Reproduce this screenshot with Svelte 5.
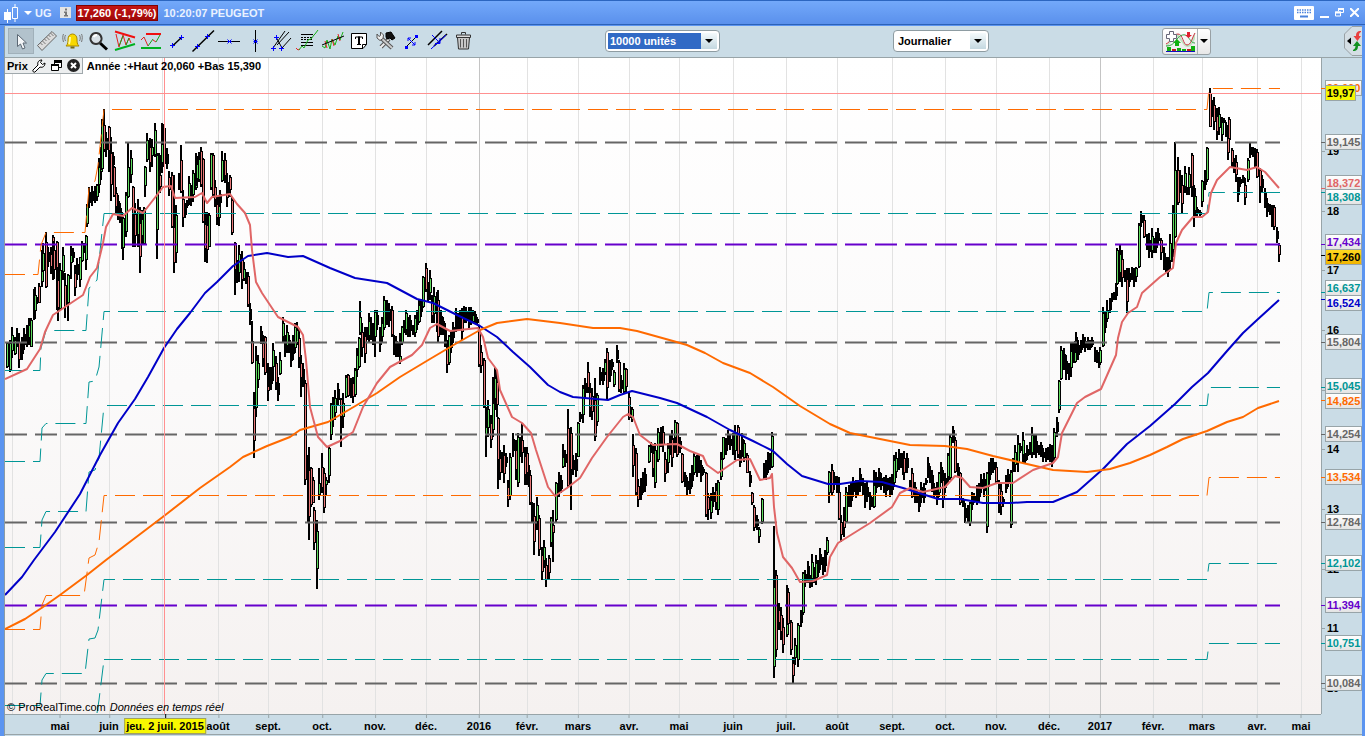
<script>
  const BLUE = "#0000c8";
  const ORANGE = "#ff6a00";
  const TEAL = "#009696";
  const SALMON = "#e06666";
  const GREY = "#666666";
  const PURPLE = "#6600cc";

  // visible plot window, in chart units
  const view = { x: 5, y: 58, width: 1316, height: 656 };

  let units = "10000 unités";
  let period = "Journalier";
  let activeTool = "Pointeur";

  const plus = (x, y) => `M${x - 2.5} ${y}h5M${x} ${y - 2.5}v5`;
  const cross = (x, y) => `M${x - 2} ${y - 2}l4 4M${x + 2} ${y - 2}l-4 4M${x - 2} ${y}h4`;

  const tools = [
    { name: "Pointeur", shapes: [{ d: "M9.5 6.500v12l3-2.500 2 5 2.500-1-2-5h3.500z", fill: "#f4f6f8", stroke: "#5c6874" }] },
    {
      name: "Règle",
      shapes: [
        { d: "M3.500 17.500L18 3.500l4.500 4.500L8 22.500z", fill: "#dcdcdc", stroke: "#666" },
        { d: "M6.500 15l2 2M8.500 13l3 3M10.500 11l2 2M12.500 9l3 3M14.500 7l2 2M16.500 5l3 3", stroke: "#777" }
      ]
    },
    {
      name: "Alertes",
      shapes: [
        { d: "M6 18c2-2 2-4 2-7 0-3 2-5 4.500-5s4.500 2 4.500 5c0 3 0 5 2 7z", fill: "#f8d800", stroke: "#a88800" },
        { d: "M10.500 18.500h4v2h-4z", fill: "#7a6a10" },
        { d: "M10 9c0 3 0 5-1 7", stroke: "#fff8a0", w: 2 },
        { d: "M5.500 7c-1 2-1 4 0 6M3.500 6c-1 2-1 5 0 8M19.500 7c1 2 1 4 0 6M21.500 6c1 2 1 5 0 8", stroke: "#777" }
      ]
    },
    {
      name: "Zoom",
      shapes: [
        { d: "M14 15l7 6.500", stroke: "#000", w: 3 },
        { d: "M10 5a5.500 5.500 0 1 0 .01 0z", fill: "#d8e0e6", stroke: "#333", w: 2 },
        { d: "M7.500 9c1-1.500 2-2 3.500-2", stroke: "#fff", w: 2 }
      ]
    },
    {
      name: "Triangles",
      shapes: [
        { d: "M4 6l3 13 4-12 3 10 3-7 2 5", stroke: "#e42020" },
        { d: "M7 18l4-10M14 17l3-7", stroke: "#18a018" },
        { d: "M3 3.500l20 6", stroke: "#f01010", w: 2 },
        { d: "M3 22l20-6", stroke: "#00b020", w: 2 }
      ]
    },
    {
      name: "Supports et résistances",
      shapes: [
        { d: "M3 12l3-3 4 9M15 12l3 2", stroke: "#e42020" },
        { d: "M10 18l5-7M18 14l4-7", stroke: "#18a018" },
        { d: "M8 6h15", stroke: "#f01010", w: 2 },
        { d: "M3 20h20", stroke: "#00b020", w: 2 }
      ]
    },
    { name: "Segment", shapes: [{ d: "M8.500 18l9-8.500", stroke: "#000", w: 1.500 }, { d: plus(8.5, 17.5) + plus(17.5, 9.5), stroke: "#00f" }] },
    { name: "Droite", shapes: [{ d: "M2.500 23.500L24 2.500", stroke: "#000", w: 1.500 }, { d: plus(7.5, 18.5) + plus(17.5, 8.5), stroke: "#00f" }] },
    { name: "Horizontale", shapes: [{ d: "M2 13.500h22", stroke: "#000" }, { d: cross(13.5, 13.5), stroke: "#00f" }] },
    { name: "Verticale", shapes: [{ d: "M13.500 2v22", stroke: "#000" }, { d: cross(13.5, 13.5), stroke: "#00f" }] },
    {
      name: "Fourchette",
      shapes: [
        { d: "M5 20L17 3M9 17L21 4M14 20l9-10M8 9l6 11", stroke: "#000" },
        { d: plus(8.5, 9.5) + plus(5.5, 20.5) + plus(13.5, 20.5), stroke: "#00f" }
      ]
    },
    {
      name: "Fibonacci",
      shapes: [
        { d: "M7 6.500h12M7 17.500h12M7 14.500h12", stroke: "#000" },
        { d: "M7 9.500h12M7 11.500h12", stroke: "#000", dash: "2 1" },
        { d: "M2 20l2 2 2-1", stroke: "#e42020" },
        { d: "M5 22l3-4 2 2 4-8 3-1 3-4 1-1 3-4", stroke: "#18b018" }
      ]
    },
    {
      name: "Régression",
      shapes: [
        { d: "M2 18l3 2 2-8 3 9 2-10 3 6 3-9 2 4 3-8", stroke: "#18b018" },
        { d: "M5 13l2 7M12 11l2 7M18 6l2 7", stroke: "#e42020" },
        { d: "M2 17L24 8", stroke: "#000" }
      ]
    },
    {
      name: "Texte",
      shapes: [
        { d: "M5.500 5.500h15v11l-3.500 4h-11.500z", fill: "#fff", stroke: "#000" },
        { d: "M20.500 16.500h-4v4", stroke: "#000" },
        { d: "M9.500 11V9h7v2M11 16.500h4", stroke: "#000" },
        { d: "M13 8.500v8", stroke: "#000", w: 2 }
      ]
    },
    {
      name: "Paramètres",
      shapes: [
        { d: "M9 19l8-8", stroke: "#555", w: 4 },
        { d: "M8.500 19.500l8-8", stroke: "#eee", w: 2 },
        { d: "M8 9l12 11", stroke: "#555", w: 4 },
        { d: "M8 9l12 11", stroke: "#ccc", w: 2 },
        { d: "M5 6v4l3 2.500 3-2 .5-3.500-3-3v3.500l-1.500 1z", fill: "#eee", stroke: "#555" },
        { d: "M14 5l5-1 4 6-3 2-2-2-3 1-1-2z", fill: "#111", stroke: "#000" }
      ]
    },
    {
      name: "Déplacer",
      shapes: [
        { d: "M8 19L19 8", stroke: "#000" },
        { d: "M7 18h3v3h-3zM17 7h3v3h-3z", fill: "#00f" },
        { d: "M10 10l7 7M14 17h3v-3M10 13v-3h3", stroke: "#00f" }
      ]
    },
    {
      name: "Dupliquer",
      shapes: [
        { d: "M4 17L18 3M10 18L23 6", stroke: "#000", w: 1.5 },
        { d: "M7 21L22 7M8 7l8 8M16 10v5.500h-5", stroke: "#00f" }
      ]
    },
    {
      name: "Supprimer",
      shapes: [
        { d: "M7.500 9.500h12l-1 11.500h-10z", fill: "#c8c8c8", stroke: "#333" },
        { d: "M10.500 11v8.500M13.500 11v8.500M16.500 11v8.500", stroke: "#555" },
        { d: "M6.500 7h14v2.500h-14z", fill: "#ddd", stroke: "#333" },
        { d: "M11.500 6.500v-2h4v2", stroke: "#333" }
      ]
    }
  ];

  const months = [
    [12, ""], [60, "mai"], [109, "juin"], [162, ""], [218, "août"], [268, "sept."], [322, "oct."],
    [375, "nov."], [426, "déc."], [479, "2016"], [527, "févr."], [578, "mars"], [629, "avr."],
    [679, "mai"], [733, "juin"], [786, "juil."], [837, "août"], [892, "sept."], [945, "oct."],
    [996, "nov."], [1049, "déc."], [1100, "2017"], [1153, "févr."], [1202, "mars"],
    [1257, "avr."], [1301, "mai"]
  ];

  const scale = [
    [151, "19"], [211, "18"], [270, "17"], [330, "16"],
    [449, "14"], [509, "13"], [569, "12"], [628, "11"], [688, "10"]
  ];

  // value, level on the chart, centre of the tag, colour
  const tags = [
    ["20,060", 88, 88, ORANGE],
    ["19,145", 142, 142, GREY],
    ["18,372", 188, 183, SALMON],
    ["18,308", 192, 197, TEAL],
    ["17,434", 244, 242, PURPLE],
    ["17,260", 255, 257, "#000000"],
    ["16,637", 292, 288, TEAL],
    ["16,524", 299, 303, BLUE],
    ["15,804", 342, 342, GREY],
    ["15,045", 387, 386, TEAL],
    ["14,825", 400, 401, ORANGE],
    ["14,254", 434, 434, GREY],
    ["13,534", 477, 477, ORANGE],
    ["12,784", 522, 522, GREY],
    ["12,102", 563, 563, TEAL],
    ["11,394", 605, 605, PURPLE],
    ["10,751", 643, 643, TEAL],
    ["10,084", 683, 683, GREY]
  ];

  const pivots = [
    [142, GREY], [342, GREY], [434, GREY], [522, GREY], [683, GREY], [244, PURPLE], [605, PURPLE]
  ];

  // yearly range levels: run-up on the left, then the long flat part
  const levels = [
    { color: ORANGE, rise: "5,274.5 38,274.5 41,245 46,232.5 85,232.5 89,188 95,181 98,165 104,109.5", flat: 109, last: 88, offset: 20 },
    { color: TEAL, rise: "5,370.5 40,370.5 41,348 46,330.5 86,330.5 89,288 92,286 97,280 104,213.5", flat: 213, last: 192, offset: 0 },
    { color: TEAL, rise: "5,461.5 40,461.5 42,428 46,423.5 86,423.5 89,382 95,381 99,367 104,311.5", flat: 311, last: 292, offset: 14 },
    { color: TEAL, rise: "5,547.5 40,547.5 42,520 46,511.5 86,511.5 89,472 95,470 99,458 104,405.5", flat: 405, last: 387, offset: 25 },
    { color: ORANGE, rise: "5,629.5 40,629.5 42,605 46,595.5 84,595.5 89,558 95,555 99,542 104,495.5", flat: 495, last: 477, offset: 17 },
    { color: TEAL, rise: "5,705.5 40,705.5 42,680 46,673.5 85,673.5 89,639 95,638 98,630 104,579.5", flat: 579, last: 563, offset: 9 },
    { color: TEAL, rise: "97,713 99,700 104,659.5", flat: 659, last: 643, offset: 1 }
  ];

  const averages = [
    {
      color: BLUE,
      points:
        "5,595 22,577 34,560 55,532 80,494 100,455 118,423 135,399 148,377 164,348 177,329 190,313 205,293 217,282 233,266 248,256 267,253 288,257 303,256 330,268 355,278 387,283 417,299 433,303 457,315 480,326 497,337 513,352 530,367 548,385 560,392 573,397 608,400 620,395 632,391 660,398 677,403 707,417 730,430 753,441 773,451 787,464 802,476 828,484 840,484 860,481 882,482 903,488 938,499 960,499 983,503 1010,503 1027,502 1053,502 1077,492 1103,469 1127,444 1150,426 1175,404 1192,387 1208,373 1227,351 1243,333 1257,320 1279,300"
    },
    {
      color: ORANGE,
      points:
        "5,629 25,619 43,607 60,595 87,575 106,560 164,516 200,488 230,467 243,457 267,446 290,437 300,430 328,422 357,405 377,393 400,377 430,359 457,343 480,330 497,323 527,319 560,323 593,328 620,328 637,331 673,341 687,345 705,353 723,363 750,373 773,387 800,406 830,424 850,433 880,439 910,445 945,446 967,449 993,456 1027,464 1053,470 1087,472 1110,469 1130,463 1150,455 1167,447 1183,439 1207,431 1227,422 1243,417 1258,408 1279,401"
    },
    {
      color: SALMON,
      points:
        "5,379 27,369 40,349 45,332 53,315 68,305 83,295 90,277 97,268 103,243 106,227 113,214 123,216 132,208 143,213 157,195 163,187 171,186 175,198 195,197 202,193 207,203 212,197 230,194 237,204 245,213 250,225 252,250 256,282 262,293 278,317 298,327 303,335 306,360 310,407 318,437 327,447 340,441 353,432 363,407 377,383 390,367 412,355 422,345 430,328 437,324 450,331 478,328 483,337 488,358 497,370 500,390 512,417 522,423 531,433 536,450 548,487 555,496 567,488 580,478 592,458 607,437 623,417 628,414 633,417 640,435 653,445 677,444 690,451 703,456 707,465 718,473 737,460 750,459 760,480 770,478 772,474 774,507 777,533 783,557 792,568 800,582 813,581 827,575 830,557 838,543 870,523 892,507 900,493 910,488 923,492 945,487 955,476 962,478 970,487 983,488 997,483 1013,483 1033,470 1053,463 1058,457 1062,433 1077,403 1085,397 1101,389 1116,355 1118,338 1122,322 1128,313 1137,307 1142,293 1160,277 1173,268 1176,243 1182,230 1193,217 1202,217 1208,212 1211,193 1217,180 1230,167 1247,170 1257,167 1265,172 1279,188"
    }
  ];

  // Price bars by period, in thirds of a unit from the period's origin:
  // x high low [open close]
  const sessions = [
    {
      origin: [0, 80],
      bars:
        "22 785 865 862 790,30 780 875 870 790,36 742 835,44 770 825 822 780,51 745 800,58 760 865,65 770 840,72 745 810,80 735 800,87 715 795,94 714 802 800 720,101 627 720 718 630,106 622 718,112 650 672,118 610 670 618 668,125 510 620 606 515,130 490 575 572 520,138 457 625 485 620,145 500 560,152 500 582,158 465 600 470 512,163 482 598,170 483 690 486 688,173 560 724,181 550 690 688 570,189 500 600,194 580 715,204 583 722 670 586,212 498 598 550 524,218 505 545,225 555 648,232 535 600,240 530 622 600 532,247 484 545 542 490,252 490 520,257 466 570 540 468,262 372 440 432 374,267 320 385,274 335 350,277 318 378,284 318 368,290 312 364 350 316,297 235 340,304 200 300,307 118 270 268 120,313 88 215 135 210,319 155 230,326 137 275 140 212,332 170 362,338 215 270,343 258 352 262 348,349 320 400,355 345 420,361 370 430,365 395 508,370 410 540 505 415,377 335 470 455 344,384 185 355 350 260,392 210 310,400 318 500 322 402,406 370 502,413 358 500,420 380 580,426 390 495,431 380 496 492 384,436 258 350 318 262,441 160 245 240 180,449 175 275,457 178 262 228 202,466 130 230 226 150,470 220 538 450 225,476 220 330,481 225 340 285 320,487 130 278 250 192,491 132 260 145 252,502 205 268,508 272 348,515 275 445 285 440,521 285 580 440 550,529 375 550 518 405,536 278 330,543 195 340 240 335,550 330 440,556 370 415,561 360 385,567 288 375,573 315 378,580 270 365 346 278,587 220 330 325 286,592 228 318,597 215 306 300 236,604 200 320 212 316,610 235 430 238 425,616 395 545,622 395 550,627 400 502 500 404,632 220 330 325 222,640 220 355 224 345,646 300 380,652 350 435,657 345 438,661 330 380,667 212 306 302 240,674 218 310,680 280 380,685 310 345,691 285 350 290 330,697 350 465 360 460,705 485 645 490 570,712 540 610,718 495 605,725 512 628,732 545 602 598 568,738 575 612,744 575 680 588 676,750 670 735,755 722 852 782 848"
    },
    {
      origin: [230, 220],
      bars:
        "72 515 713,78 378 592 565 420,85 405 505,93 318 372,99 345 440,105 348 465 352 458,113 430 542,118 440 500,123 440 510,130 368 482 440 390,137 408 510 430 490,143 470 542,150 395 465 462 420,158 290 370,165 345 410,172 315 400,178 345 400,182 370 440,189 345 420,195 310 400 385 320,202 305 375 370 330,208 325 445,214 405 532 430 475,220 430 500,226 480 795 490 780,233 705 905,237 680 960,243 740 860 745 856,248 770 850 780 848,252 862 990 870 970,262 900 1106 1046 932,268 745 840 825 788,275 700 820 740 805,282 745 880 760 865,289 770 825 796 780,297 680 790 768 684,302 550 660 645 552,309 530 622,316 510 600,323 490 555,333 535 682 537 590,340 520 625 590 550,348 465 535 530 470,354 462 530 466 528,362 475 535,370 470 550,376 445 530 526 450,382 385 470,387 350 445 442 354,390 243 345 340 290,397 310 410,404 320 428,410 320 360,416 280 370,422 290 360,428 310 375,435 270 410 350 275,441 270 330,449 320 395,456 290 370,462 228 330 325 240,470 240 315,476 250 320,485 258 350 270 345,491 345 405,498 348 410,504 368 412,509 340 432 425 408,515 318 375 370 320,522 300 340,528 270 345 330 280,535 290 350,541 285 350,548 315 345,554 285 350 340 295,560 270 330,566 240 310 305 255,573 238 290,580 168 265 260 170,588 130 215 145 210,594 185 245,600 150 240,607 225 310,613 200 310,620 215 335,625 210 365 240 350,632 270 345,638 290 345,645 310 380,652 360 460,657 345 435 430 348,664 330 400,670 305 370,677 265 335,684 280 330,690 270 330,695 265 360,702 258 310,709 262 310,716 262 325,722 262 315,729 270 310 305 285,736 272 310,741 290 315,746 315 440 330 435,752 375 460,763 415 565 420 560,768 560 712 645 620,775 540 650,782 585 685,790 470 650 630 550,796 440 570,800 450 590,805 590 808 595 720,811 690 780,817 695 760,822 675 790,828 700 740,834 780 860,841 700 840 828 710,849 640 710,857 660 780,863 640 800 790 650,870 650 710,877 610 730 660 700,884 680 795,890 680 795 700 760,896 735 800,901 760 855 765 850,906 845 905,912 850 1005,920 830 930,928 885 1008 895 990,936 980 1080,942 960 1045,948 1015 1100,956 1005 1080 1015 1060,963 890 980 970 895,970 870 1025 915 940"
    },
    {
      origin: [540, 320],
      bars:
        "49 485 605 600 490,56 455 530,63 465 520,70 372 445 440 410,76 390 440,84 268 500 325 498,93 320 570 340 450,100 405 465,107 400 470,115 305 412 410 310,121 275 305,129 195 310 285 205,135 175 235,144 125 220 155 205,151 190 290,157 205 300,164 175 362 240 350,172 220 318 305 225,181 142 195,188 145 195,194 118 165 160 125,201 85 238 95 205,209 120 185,216 118 150,222 150 200 195 155,231 75 130,238 120 215 125 210,244 165 220,251 128 222 215 148,258 145 215 148 200,268 215 300 230 295,275 262 305 300 268,280 342 470,287 385 525 398 520,295 478 560,303 475 540,310 455 520,316 445 515,326 375 428 425 378,332 365 400,339 375 470,346 370 505 488 390,355 325 425 420 335,362 320 380,369 318 395,376 395 485,383 370 460 430 385,390 345 405,396 330 440,402 355 400,406 300 400 355 305,411 305 410 308 405,419 350 400,427 400 488 402 486,434 455 500,442 470 525,449 460 522,456 435 500,463 400 465 460 408,470 405 470,477 405 460,484 420 485,490 440 465,497 455 590 460 585,505 520 600 530 570,512 520 598,519 500 560,527 490 570,535 480 585 570 485,543 395 480 470 418,550 350 420 418 352,557 355 405,564 330 375,570 345 390,578 338 405,585 315 420,593 315 415 320 405,600 390 440,607 340 410,613 360 425 415 370,621 400 460 405 458,630 452 500,636 515 555 520 550,643 555 632 560 625,651 585 630,658 620 670 650 628,667 535 612 605 538,673 430 480,679 420 480,685 395 460,690 400 450,695 335 445 440 348,702 618 1075 1040 800,709 750 1010 765 990,716 850 930,723 860 960,729 895 1000,740 795 950 945 810,745 805 915 815 912,754 900 1005 905 990,760 1010 1088,765 955 1035,775 910 1040 1020 915,782 870 920,790 755 885 880 760,796 750 800,803 722 790,810 765 805,816 702 800,823 740 790,829 705 795,835 720 770,841 685 750,848 710 765,855 690 755,862 652 705 700 660"
    },
    {
      origin: [820, 320],
      bars:
        "28 453 548 520 456,36 433 525 450 520,43 455 510,50 468 520,56 470 600 515 598,64 585 665,71 560 650 600 625,79 500 610 605 515,86 495 560,93 488 560,100 470 530,107 480 535,114 480 525,121 443 515,128 475 525,134 490 565,141 485 545,149 515 570,156 530 560,162 450 565 560 495,169 455 520,176 443 500,184 460 510,191 470 520,198 465 530,205 475 510,211 470 530,217 462 525,223 405 500 490 420,229 395 475,237 388 450,243 400 445,248 400 465,253 393 480,260 400 460,270 480 510,276 445 535 460 530,284 485 550,291 510 550,297 520 575,304 485 550,311 490 550,318 475 495,323 412 475,330 438 490,336 450 515,343 490 535,350 485 555,356 455 530 520 460,363 425 490,369 450 565,376 458 520,384 400 490 470 405,391 345 480 475 350,399 318 370,405 350 460 360 455,413 430 470,421 455 555 460 550,429 535 560,436 550 608,443 555 605,450 545 618 608 550,456 515 570,463 520 550,471 495 555,478 490 545,484 462 520,491 460 530,501 455 640 620 460,508 425 500,513 415 465,520 415 460,527 425 490 440 485,536 480 580,543 490 585,550 530 560,558 465 520,565 448 500,573 450 625 615 455,579 415 455,586 375 455,593 345 455,600 370 400,609 335 430,615 400 430,622 375 420,629 365 405,635 322 415 400 345,642 345 405,649 345 415,656 375 405,663 365 410,670 385 425,677 385 425,684 380 420,690 372 425,697 375 440,703 325 420 415 335,711 290 350,718 180 280 270 182,723 78 180 178 90,731 85 150,738 105 180,746 130 180,753 68 170,759 65 130,764 62 130 125 75,768 35 100,775 60 120,782 60 100,789 42 85,796 52 95,803 52 90,810 60 90,817 52 82,824 80 125,830 90 130,837 95 145,841 80 135 130 90"
    },
    {
      origin: [1040, 80],
      bars:
        "189 680 800 798 698,195 695 760,201 660 725 718 690,209 655 700,215 640 665,222 635 660,227 608 660,232 505 615 612 510,240 495 605,247 510 620,254 570 605,261 565 698,267 565 620,275 560 600,282 565 620,289 560 605 592 565,297 430 565 562 435,303 392 440,312 405 475 420 470,320 462 510,327 460 535,335 445 535,342 475 520,348 455 520,354 445 495,364 475 540 480 520,371 500 570,377 530 575,384 530 590,390 462 570,397 490 545,400 375 515 510 400,405 185 475 470 270,414 230 375 270 370,421 270 340,427 285 402,435 258 340,441 320 345,448 260 345,456 218 350 225 320,461 315 440,466 325 415,470 380 410,480 390 410,487 300 380 365 302,495 270 330,502 200 305 300 203,509 25 142 40 140,516 60 110,523 50 150,530 85 180,537 82 165,545 110 182 165 125,553 115 130,558 125 170,566 112 190 116 180,565 150 240,575 205 265 210 250,582 235 280,588 225 305,595 290 365,601 290 320,608 285 310,615 295 375,624 235 305 300 240,630 190 235,638 200 232,645 205 260,652 208 295 215 290,660 265 370 270 320,667 285 335,675 325 385,682 355 410,690 372 405,697 375 440,702 375 450 380 440,712 440 490,718 490 545 495 525"
    }
  ];

  function readSession({ origin, bars }) {
    const [ox, oy] = origin;
    let previous = 0;
    return bars.split(",").map((bar) => {
      const [x, high, low, open, close] = bar.split(" ").map(Number);
      const middle = (high + low) / 2;
      const inset = (low - high) * 0.25;
      const up = open === undefined ? middle < previous : close < open;
      const top = open === undefined ? high + inset : Math.min(open, close);
      const bottom = open === undefined ? low - inset : Math.max(open, close);
      previous = middle;
      const toY = (value) => oy + Math.round(value / 3);
      return {
        x: ox + Math.round(x / 3),
        high: toY(high),
        low: toY(low),
        top: toY(top),
        bottom: toY(bottom),
        up,
        filled: open !== undefined || low - high > 75
      };
    });
  }

  const candles = sessions.flatMap(readSession);

  const left = (x) => ((x - view.x) / view.width) * 100;
  const top = (y) => ((y - view.y) / view.height) * 100;
</script>

<main class="window">
  <header class="titlebar">
    <svg class="logo" width="16" height="20" viewBox="0 0 16 20">
      <path d="M0 9h7v8H0zM3 6h1v14H3z" fill="#fff" />
      <path d="M8.500 4.500h5v11h-5zM11 1v3.500M11 15.500V19" fill="none" stroke="#fff" />
    </svg>
    <button class="caret" aria-label="Choisir une valeur">
      <svg width="8" height="4" viewBox="0 0 8 4"><path d="M0 0h8L4 4z" fill="#fff" /></svg>
    </button>
    <span class="ticker">UG</span>
    <button class="info" aria-label="Informations">
      <svg width="11" height="11" viewBox="0 0 11 11">
        <path d="M0 0h11v11H0z" fill="#e4e4e4" />
        <path d="M5 1.500h2v2H5zM4 4.500h3V8h1v1.500H4V8h1V6H4z" fill="#777" />
      </svg>
    </button>
    <strong class="quote">17,260 (-1,79%)</strong>
    <span class="name">10:20:07 PEUGEOT</span>
    <div class="controls">
      <button aria-label="Clavier">
        <svg width="20" height="14" viewBox="0 0 20 14">
          <rect width="20" height="14" rx="1" fill="#fff" />
          <path d="M3 4h14M3 6.500h14" stroke="#4b82dc" stroke-width="1.500" stroke-dasharray="1.500 1" />
          <path d="M6 10.500h8" stroke="#4b82dc" stroke-width="2" />
        </svg>
      </button>
      <button aria-label="Réduire">
        <svg width="9" height="12" viewBox="0 0 9 12"><path d="M0 10h9" stroke="#fff" stroke-width="2" /></svg>
      </button>
      <button aria-label="Restaurer">
        <svg width="9" height="9" viewBox="0 0 9 9">
          <path d="M3.500 3V.5h5v4H6M.5 4h5v4h-5z" fill="none" stroke="#fff" />
          <path d="M3 1h6M0 4.500h6" stroke="#fff" stroke-width="2" />
        </svg>
      </button>
      <button aria-label="Fermer">
        <svg width="9" height="9" viewBox="0 0 9 9"><path d="M0 0l9 9M9 0L0 9" stroke="#fff" stroke-width="2" /></svg>
      </button>
    </div>
  </header>

  <div class="body">
    <nav class="toolbar">
      <div class="tools">
        {#each tools as tool}
          <button
            class="tool"
            class:active={activeTool === tool.name}
            aria-label={tool.name}
            on:click={() => (activeTool = tool.name)}
          >
            <svg width="26" height="26" viewBox="0 0 26 26">
              {#each tool.shapes as shape}
                <path
                  d={shape.d}
                  fill={shape.fill ?? "none"}
                  stroke={shape.stroke ?? "none"}
                  stroke-width={shape.w ?? 1}
                  stroke-dasharray={shape.dash}
                />
              {/each}
            </svg>
          </button>
        {/each}
      </div>

      <label class="combo units">
        <select bind:value={units} aria-label="Unités">
          <option>10000 unités</option>
          <option>1000 unités</option>
        </select>
        <span class="arrow"></span>
      </label>
      <label class="combo period">
        <select bind:value={period} aria-label="Période">
          <option>Journalier</option>
          <option>Hebdomadaire</option>
        </select>
        <span class="arrow"></span>
      </label>

      <div class="indicators">
        <button aria-label="Ajouter un indicateur">
          <svg width="32" height="22" viewBox="0 0 32 22">
            <path d="M2 15c5-2 7-11 11-11s6 11 10 11 5-6 8-12v6c-3 6-4 8-8 8S16 7 12 7 7 15 2 17z" fill="#bfe4bf" />
            <path d="M2 14c5-2 7-10 12-10s5 11 9 11 5-7 8-12" fill="none" stroke="#cc3040" />
            <path d="M2 16c6 0 8-3 11-7s8-6 11-2 4 6 7 6" fill="none" stroke="#38a048" />
            <path d="M5.500 1.500h4v3h3v4h-3v3h-4v-3h-3v-4h3z" fill="#fff" stroke="#667" />
            <path d="M11 16h4v-3h2l-4-4-4 4h2z" fill="#10b010" />
            <path d="M23 2h3v3h2l-3.500 3L21 5h2z" fill="#e02030" />
            <path d="M3 17h4v4H3zM13 18h4v3h-4zM18 19h4v2h-4zM27 16h4v5h-4z" fill="#10b010" />
            <path d="M8 19h4v2H8zM23 19h4v2h-4z" fill="#c02020" />
            <path d="M2 21.500h29" stroke="#1010c0" />
          </svg>
        </button>
        <button class="more" aria-label="Liste des indicateurs">
          <svg width="8" height="4" viewBox="0 0 8 4"><path d="M0 0h8L4 4z" /></svg>
        </button>
      </div>

      <button class="trade" aria-label="Ouvrir le carnet d'ordres">
        <svg width="18" height="30" viewBox="0 0 18 30">
          <path d="M18 .5H8L.5 8v14L8 29.500h10" fill="#d4dee4" stroke="#98a0a4" />
          <path d="M7 11.500v7L3 15z" />
          <path d="M17 5c-4 0-5 2-5 5H9.500l4 5 3.500-5h-2c0-2 0-3 2-4z" fill="#e84040" />
          <path d="M9 25c4 0 5-2 5-5h3l-4-5-4 5h2.500c0 2-1 3-2.500 4z" fill="#109020" />
        </svg>
      </button>
    </nav>

    <section class="chart">
      <div class="plot">
        <svg
          class="drawing"
          viewBox="{view.x} {view.y} {view.width} {view.height}"
          preserveAspectRatio="none"
          role="img"
          aria-label="Cours de Peugeot"
        >
          {#each months as [x, label]}
            <line x1={x + 0.5} x2={x + 0.5} y1="58" y2="714" stroke={label.startsWith("20") ? "#c4c4c4" : "#e2e2e2"} />
          {/each}

          <g shape-rendering="crispEdges">
            {#each candles as c}
              <rect x={c.x - 1} y={c.high} width="2" height={c.low - c.high} />
              <rect x={c.x - 1} y={c.top} width="3" height={c.bottom - c.top} />
              {#if c.filled && c.bottom - c.top > 2}
                <rect x={c.x} y={c.top + 1} width="1" height={c.bottom - c.top - 2} fill={c.up ? "#5fdc5f" : "#e87878"} />
              {/if}
            {/each}
          </g>

          {#each pivots as [y, color]}
            <line x1="5" x2="1280" y1={y + 0.5} y2={y + 0.5} stroke={color} stroke-width="2" stroke-dasharray="22 8" />
          {/each}

          {#each levels as level}
            <g fill="none" stroke={level.color} stroke-dasharray="20 8">
              <polyline points={level.rise} />
              <polyline
                points="104,{level.flat + 0.5} 1207,{level.flat + 0.5} 1209,{level.last + 0.5} 1280,{level.last + 0.5}"
                stroke-dashoffset={level.offset}
              />
            </g>
          {/each}

          {#each averages as average}
            <polyline points={average.points} fill="none" stroke={average.color} stroke-width="2" stroke-linejoin="round" />
          {/each}

          <path d="M5 93.500h1316M164.500 58v656" fill="none" stroke="#ff9090" />
        </svg>

        <div class="legend">
          <div class="series">
            <span>Prix</span>
            <button aria-label="Réglages">
              <svg width="14" height="14" viewBox="0 0 14 14">
                <path d="M1 11l5-5c-1-3 1-5 4-5L8.500 3.500l2 2L13 4c0 3-2 5-5 4l-5 5c-1 1-3-1-2-2z" fill="#fff" stroke="#000" />
              </svg>
            </button>
            <button aria-label="Détacher">
              <svg width="13" height="13" viewBox="0 0 13 13">
                <path d="M4.500 1.500h7v7h-7z" fill="#fff" stroke="#000" />
                <path d="M4 1h8v3H4z" />
                <path d="M1.500 5.500h7v6h-7z" fill="#fff" stroke="#000" />
                <path d="M1 5h8v2H1z" />
              </svg>
            </button>
            <button aria-label="Masquer">
              <svg width="13" height="13" viewBox="0 0 13 13">
                <circle cx="6.500" cy="6.500" r="6.500" fill="#222" />
                <path d="M4 4l5 5M9 4l-5 5" stroke="#fff" stroke-width="2" />
              </svg>
            </button>
          </div>
          <span>Année :+Haut 20,060 +Bas 15,390</span>
        </div>

        <p class="credit"><span>© ProRealTime.com</span> <em>Données en temps réel</em></p>
      </div>

      <aside class="prices">
        <i class="tick level" style="top: {top(390)}%"></i>
        {#each scale as [y, label]}
          <span class="mark minor" style="top: {top(y)}%">{label}</span>
        {/each}
        {#each tags as [, y, , color]}
          <i class="tick" style="top: {top(y)}%; background: {color}"></i>
        {/each}
        {#each tags as [value, , y, color]}
          <span class="tag" class:last={value === "17,260"} style="top: {top(y)}%; color: {color}">{value}</span>
        {/each}
        <span class="tag cursor" style="top: {top(93)}%">19,97</span>
      </aside>

      <footer class="dates">
        {#each months as [x, label]}
          {#if label}
            <span class="mark" style="left: {left(x)}%">{label}</span>
          {/if}
        {/each}
        <span class="mark day" style="left: {left(165)}%">jeu. 2 juil. 2015</span>
      </footer>
    </section>
  </div>
</main>

<style>
  :global(body) {
    margin: 0;
  }

  .window {
    display: flex;
    flex-direction: column;
    height: 100vh;
    box-sizing: border-box;
    border-top: 1px solid #2c66c0;
    background: #5b94f0;
    font-family: "Liberation Sans", Arial, sans-serif;
    font-size: 11px;
    font-weight: bold;
    line-height: 14px;
    color: #000;
    overflow: hidden;
  }

  button {
    display: flex;
    padding: 0;
    border: 0;
    background: none;
    cursor: pointer;
  }

  .titlebar {
    display: flex;
    align-items: center;
    height: 24px;
    padding: 0 6px 0 4px;
    box-sizing: border-box;
    border-bottom: 1px solid #2c62b8;
    background: linear-gradient(#73a9fa, #5a90ec);
    color: #eaf2ff;
  }

  .caret {
    margin-left: 4px;
  }

  .ticker {
    margin-left: 3px;
  }

  .info {
    margin-left: 8px;
  }

  .quote {
    margin-left: 5px;
    padding: 0 1px;
    border: 1px solid #800000;
    background: linear-gradient(#c41414, #a00808);
    color: #fff;
  }

  .name {
    margin-left: 5px;
    white-space: nowrap;
  }

  .controls {
    display: flex;
    align-items: center;
    gap: 6px;
    margin-left: auto;
  }

  .body {
    display: flex;
    flex: 1;
    flex-direction: column;
    min-height: 0;
    margin: 1px 3px 0 4px;
    border-left: 1px solid #8c9ca4;
    background: #cadce6;
  }

  .toolbar {
    display: flex;
    align-items: center;
    height: 30px;
    padding: 0 0 1px 3px;
    border-bottom: 1px solid #98a4a8;
  }

  .tools {
    display: flex;
  }

  .tool.active {
    background: #b2c2cc;
    box-shadow: inset 0 0 0 1px #a0b0ba;
  }

  .combo {
    position: relative;
    height: 22px;
    padding: 2px;
    box-sizing: border-box;
    border: 1px solid #8e9ca2;
    border-radius: 4px;
    background: #fff;
  }

  .combo select {
    display: block;
    width: 100%;
    height: 16px;
    padding: 0 2px;
    border: 0;
    appearance: none;
    background: transparent;
    color: #000;
    font: inherit;
    line-height: 16px;
  }

  .units {
    width: 115px;
    margin-left: 129px;
  }

  .units select {
    background: linear-gradient(#316ac5, #316ac5) no-repeat 0 0 / 94px 16px;
    color: #fff;
  }

  .period {
    width: 96px;
    margin-left: 173px;
  }

  .arrow {
    position: absolute;
    top: 2px;
    right: 2px;
    display: grid;
    place-items: center;
    width: 16px;
    height: 16px;
    background: linear-gradient(#f4fafc, #c4d8e0);
    pointer-events: none;
  }

  .arrow::after {
    content: "";
    border: 4px solid transparent;
    border-top-color: #000;
    border-bottom: 0;
  }

  .indicators {
    display: flex;
    margin-left: auto;
    border: 1px solid #98a0a4;
    border-radius: 3px;
    background: linear-gradient(#fff, #e8e8e8);
  }

  .indicators button {
    align-items: center;
    height: 25px;
    padding: 0 1px;
  }

  .indicators .more {
    padding: 0 2px;
    border-left: 1px solid #a8b0b4;
  }

  .trade {
    margin-left: 133px;
  }

  .chart {
    display: grid;
    flex: 1;
    grid-template-columns: 1fr 41px;
    grid-template-rows: 1fr 20px;
    min-height: 0;
    margin-bottom: 2px;
    box-shadow: 0 1px 0 #98a4a8;
  }

  .plot {
    position: relative;
    min-height: 0;
    background: linear-gradient(#ffffff, #fbfafa 50%, #f5f1f0);
    box-shadow: 1px 0 0 #98a4a8, 0 1px 0 #98a4a8;
  }

  .drawing {
    display: block;
    width: 100%;
    height: 100%;
  }

  .legend {
    position: absolute;
    top: 0;
    left: 0;
    display: flex;
    gap: 4px;
    align-items: center;
    white-space: nowrap;
  }

  .series {
    display: flex;
    gap: 4px;
    align-items: center;
    height: 15px;
    padding: 0 2px;
    border: 1px solid #a0a8ac;
    border-width: 0 1px 1px 0;
    background: #eceeef;
  }

  .credit {
    position: absolute;
    bottom: 0;
    left: 2px;
    display: flex;
    gap: 4px;
    margin: 0;
    font-weight: normal;
    white-space: nowrap;
  }

  .prices {
    position: relative;
  }

  .mark,
  .tag,
  .tick {
    position: absolute;
    white-space: nowrap;
  }

  .minor {
    left: 6px;
    transform: translateY(-50%);
  }

  .minor::before {
    content: "";
    position: absolute;
    top: 50%;
    left: -6px;
    width: 4px;
    height: 1px;
    background: #98a4a8;
  }

  .tick {
    left: 0;
    width: 5px;
    height: 1px;
  }

  .tick.level {
    background: #98a4a8;
  }

  .tag {
    left: 4px;
    width: 35px;
    height: 14px;
    border: 1px solid #98a4a8;
    background: linear-gradient(#fff, #e4e4e4);
    text-align: center;
    transform: translateY(-50%);
  }

  .tag.last {
    background: linear-gradient(#ffd820, #f0b400);
  }

  .tag.cursor {
    width: 29px;
    background: #f6f600;
  }

  .dates {
    position: relative;
    grid-column: 1 / -1;
    margin-right: 41px;
  }

  .dates .mark {
    top: 5px;
    transform: translateX(-50%);
  }

  .dates .mark::before {
    content: "";
    position: absolute;
    top: -5px;
    left: 50%;
    width: 1px;
    height: 4px;
    background: #98a4a8;
  }

  .dates .day {
    top: 4px;
    padding: 0 1px;
    border: 1px solid #a0a060;
    background: #f8f800;
  }

  .dates .day::before {
    background: #000;
  }
</style>
